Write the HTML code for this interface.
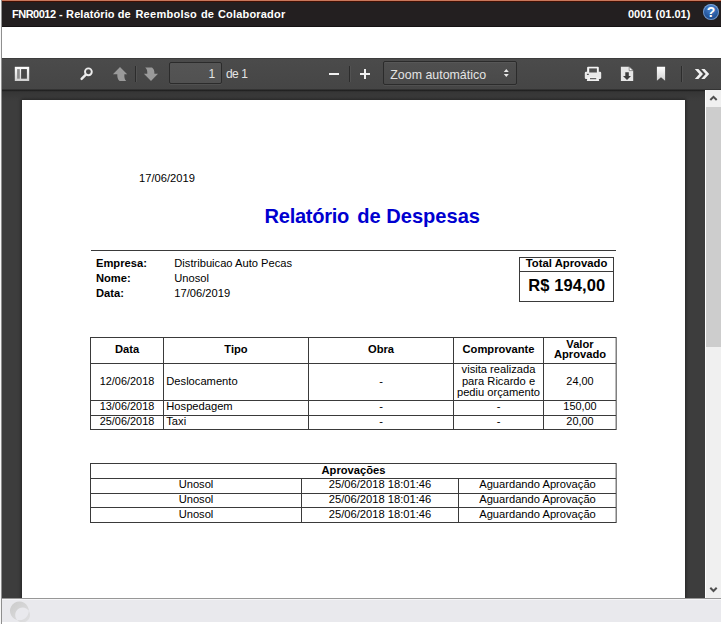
<!DOCTYPE html>
<html lang="pt-BR">
<head>
<meta charset="utf-8">
<title>FNR0012 - Relatório de Reembolso de Colaborador</title>
<style>
html,body{margin:0;padding:0;}
body{width:721px;height:624px;overflow:hidden;background:#fff;position:relative;font-family:"Liberation Sans",Arial,sans-serif;}
.abs{position:absolute;}
#titlebar{left:0;top:0;width:721px;height:27px;background:linear-gradient(#c8775b 0,#c8775b 1px,#430f02 1px,#430f02 2px,#231f20 2px,#231f20 26px,#151213 26px);}
#titlebar .t{position:absolute;color:#fff;font-weight:bold;font-size:11px;line-height:13px;top:8px;white-space:nowrap;}
#help{left:703px;top:4px;width:16px;height:16px;border-radius:50%;background:radial-gradient(circle at 50% 28%,#4f8ad6 0,#27599f 55%,#133b7c 100%);box-shadow:inset 0 0 0 1px rgba(165,195,232,.6);color:#fff;font-weight:bold;font-size:14px;line-height:17px;text-align:center;z-index:8;}
#winl{left:0;top:0;width:2px;height:624px;background:#f8f8f8;z-index:6;}
#winl2{left:1px;top:0;width:1px;height:624px;background:#8f8f8f;z-index:7;}
#toolbar{left:2px;top:58px;width:719px;height:32px;background:linear-gradient(#4b4b4b,#454545);box-shadow:0 1px 1px rgba(0,0,0,.35), inset 0 -1px 0 rgba(0,0,0,.25), inset 0 1px 0 rgba(0,0,0,.18);z-index:3;}
#viewer{left:2px;top:90px;width:703px;height:508px;background:linear-gradient(#343434,#3c3c3c 9px,#3d3d3d 12px);overflow:hidden;}
#sheet{left:22px;top:100px;width:663px;height:498px;background:#fff;box-shadow:0 0 3px 1px rgba(0,0,0,.42);}
#sb{left:705px;top:90px;width:16px;height:508px;background:#f0f0f0;border-left:1px solid #fff;box-sizing:border-box;z-index:4;}
#sbthumb{left:706px;top:107px;width:15px;height:240px;background:#cdcdcd;z-index:4;}
#status{left:2px;top:598px;width:719px;height:24px;background:#e9e9ed;border-top:1px solid #979797;box-sizing:border-box;box-shadow:inset 0 1px 0 #f6f6f8;}
#pgnum{left:169px;top:62px;width:53px;height:22px;box-sizing:border-box;background:linear-gradient(#555,#515151);border:1px solid #2b2b2b;border-radius:2px;box-shadow:0 1px 0 rgba(255,255,255,.06);z-index:3;}
#zoomsel{left:383px;top:61px;width:134px;height:24px;box-sizing:border-box;background:linear-gradient(#4f4f4f,#494949);border:1px solid #2b2b2b;border-radius:2px;box-shadow:0 1px 0 rgba(255,255,255,.06), inset 0 1px 0 rgba(255,255,255,.05);z-index:3;}
#titlebar .w{position:absolute;top:0;}
.doc{color:#000;font-size:11.16px;line-height:13px;white-space:nowrap;}
.b{font-weight:bold;}
.hl{background:#333;height:1px;}
.vl{background:#333;width:1px;}
.c{text-align:center;}
.tbtext{color:#e4e4e4;font-size:12.4px;line-height:14px;white-space:nowrap;}
</style>
</head>
<body>
<div id="titlebar" class="abs">
  <div class="t" style="left:12px;"><span class="w" style="left:0;letter-spacing:-0.5px;">FNR0012</span> <span class="w" style="left:47px;">-</span> <span class="w" style="left:54.1px;letter-spacing:0.1px;">Relatório</span> <span class="w" style="left:105.7px;">de</span> <span class="w" style="left:123.4px;letter-spacing:0.27px;">Reembolso</span> <span class="w" style="left:189px;">de</span> <span class="w" style="left:206px;letter-spacing:0.18px;">Colaborador</span></div>
  <div class="t" style="left:628px;">0001 (01.01)</div>
</div>
<div id="help" class="abs">?</div>
<div id="winl" class="abs"></div>
<div id="winl2" class="abs"></div>

<div id="viewer" class="abs"></div>
<div id="toolbar" class="abs">
</div>
<!-- toolbar items (absolute in body coords) -->
<svg class="abs" style="left:0;top:58px;z-index:4;" width="721" height="32" viewBox="0 58 721 32">
  <defs>
    <linearGradient id="gw" x1="0" y1="0" x2="0" y2="1"><stop offset="0" stop-color="#ffffff"/><stop offset="1" stop-color="#d0d0d0"/></linearGradient>
  </defs>
  <!-- sidebar toggle -->
  <g>
    <rect x="14.8" y="66.8" width="14.4" height="14.2" fill="url(#gw)"/>
    <rect x="17.1" y="69.1" width="2.7" height="9.6" fill="#8c8c8c"/>
    <rect x="21.1" y="69.1" width="5.8" height="9.6" fill="#484848"/>
  </g>
  <!-- search -->
  <g fill="none" stroke="#ececec">
    <circle cx="88.4" cy="71.8" r="3.4" stroke-width="1.9"/>
    <path d="M85.6 74.8 L81.6 78.9" stroke-width="2.4" stroke-linecap="round"/>
  </g>
  <!-- up arrow -->
  <path d="M120 67 L127.2 74.3 L124.4 74.3 C124.2 77.5 124.6 79.6 126.2 81 L119.6 81 C117.6 79.6 117.2 77 117.3 74.3 L112.9 74.3 Z" fill="#9a9a9a"/>
  <!-- sep -->
  <rect x="135" y="66" width="1" height="16" fill="#2c2c2c"/><rect x="136" y="66" width="1" height="16" fill="#525252"/>
  <!-- down arrow -->
  <path d="M151 81 L143.9 73.7 L147.3 73.7 C147.4 71 147 69 145.2 67.6 L152 67.6 C154 69 154.5 71 154.4 73.7 L158 73.7 Z" fill="#9a9a9a"/>
  <!-- minus -->
  <rect x="329" y="73" width="10" height="2" fill="#f0f0f0"/>
  <rect x="349" y="66" width="1" height="16" fill="#2c2c2c"/><rect x="350" y="66" width="1" height="16" fill="#525252"/>
  <!-- plus -->
  <rect x="360" y="73" width="10" height="2" fill="#f0f0f0"/><rect x="364" y="69" width="2" height="10" fill="#f0f0f0"/>
  <!-- select arrows -->
  <path d="M503.8 72 L506.3 69 L508.8 72 Z M503.8 74 L508.8 74 L506.3 77 Z" fill="#e8e8e8"/>
  <!-- print -->
  <g>
    <rect x="587.1" y="66.8" width="11.7" height="7" rx="1" fill="#f4f4f4"/>
    <rect x="584.8" y="71.8" width="16.4" height="7.1" rx="1.2" fill="#e9e9e9"/>
    <rect x="589.2" y="68.4" width="7.7" height="4.1" fill="#505050"/>
    <path d="M587.6 77 L598.4 77 L599.2 81 L586.8 81 Z" fill="#f0f0f0"/>
    <rect x="590" y="78.2" width="6.2" height="1" fill="#444"/>
    <rect x="586.9" y="73.8" width="1.9" height="1.1" fill="#444"/>
  </g>
  <!-- download -->
  <g>
    <path d="M620.9 66.8 L629.2 66.8 L633.2 70.6 L633.2 81 L620.9 81 Z" fill="#e6e6e6"/>
    <path d="M629.2 66.8 L633.2 70.6 L629.2 70.6 Z" fill="#ffffff" stroke="#555" stroke-width="0.6"/>
    <path d="M625.3 72.2 L628.8 72.2 L628.8 76.1 L631 76.1 L627 80 L623 76.1 L625.3 76.1 Z" fill="#3c3c3c"/>
  </g>
  <!-- bookmark -->
  <path d="M656.9 66.8 L665.1 66.8 L665.1 80.8 L661 77.2 L656.9 80.8 Z" fill="url(#gw)"/>
  <rect x="681" y="66" width="1" height="16" fill="#2c2c2c"/><rect x="682" y="66" width="1" height="16" fill="#525252"/>
  <!-- chevrons -->
  <path d="M694.8 69.1 L698.4 69.1 L703 74 L698.4 78.9 L694.8 78.9 L699.3 74 Z M701.2 69.1 L704.6 69.1 L709.2 74 L704.6 78.9 L701.2 78.9 L705.7 74 Z" fill="#f0f0f0"/>
</svg>
<div class="abs" id="pgnum"></div>
<div class="abs tbtext" style="left:205px;top:66.5px;width:10.3px;text-align:right;z-index:5;font-size:12px;">1</div>
<div class="abs tbtext" style="left:226px;top:66.5px;z-index:5;letter-spacing:-0.55px;word-spacing:0.2px;font-size:12px;">de 1</div>
<div class="abs" id="zoomsel"></div>
<div class="abs tbtext" style="left:390.3px;top:67.5px;z-index:5;">Zoom automático</div>
<div id="sheet" class="abs"></div>
<div id="sb" class="abs"></div>
<div id="sbthumb" class="abs"></div>
<div id="status" class="abs"></div>
<svg class="abs" style="left:705px;top:90px;z-index:5;" width="16" height="508" viewBox="705 90 16 508">
  <path d="M710.3 100 L713.5 96.8 L716.7 100" fill="none" stroke="#505050" stroke-width="2"/>
  <path d="M710.3 587.8 L713.5 591 L716.7 587.8" fill="none" stroke="#505050" stroke-width="2"/>
</svg>
<svg class="abs" style="left:2px;top:599px;" width="40" height="23" viewBox="2 599 40 23">
  <defs><linearGradient id="cg" x1="0" y1="0" x2="1" y2="1"><stop offset="0" stop-color="#cbcbcb"/><stop offset="1" stop-color="#e0e0e2"/></linearGradient></defs>
  <path fill-rule="evenodd" fill="url(#cg)" d="M19.4 601.5 a9.4 9.4 0 1 0 0.01 0 Z M22.6 607.6 a7.4 7.4 0 1 0 0.01 0 Z"/>
</svg>
<div class="abs doc" style="top:171.63px;font-size:11.16px;line-height:13px;left:139px;">17/06/2019</div>
<div class="abs doc" style="top:203.84px;font-size:20.1px;line-height:24px;font-weight:bold;color:#0000d0;left:264.6px;"><span style="letter-spacing:-0.3px;margin-right:2.6px;">Relatório</span> de Despesas</div>
<div class="abs" style="left:91px;top:250px;width:525px;height:1px;background:#3a3a3a;"></div>
<div class="abs doc" style="top:256.93px;font-size:11.16px;line-height:13px;font-weight:bold;left:96px;">Empresa:</div>
<div class="abs doc" style="top:256.93px;font-size:11.16px;line-height:13px;left:174.3px;">Distribuicao Auto Pecas</div>
<div class="abs doc" style="top:271.93px;font-size:11.16px;line-height:13px;font-weight:bold;left:96px;">Nome:</div>
<div class="abs doc" style="top:271.93px;font-size:11.16px;line-height:13px;left:174.3px;">Unosol</div>
<div class="abs doc" style="top:286.93px;font-size:11.16px;line-height:13px;font-weight:bold;left:96px;">Data:</div>
<div class="abs doc" style="top:286.93px;font-size:11.16px;line-height:13px;left:174.3px;">17/06/2019</div>
<div class="abs" style="left:519px;top:257px;width:95px;height:1px;background:#3a3a3a;"></div>
<div class="abs" style="left:519px;top:271px;width:95px;height:1px;background:#3a3a3a;"></div>
<div class="abs" style="left:519px;top:301px;width:95px;height:1px;background:#3a3a3a;"></div>
<div class="abs" style="left:519px;top:257px;width:1px;height:45px;background:#3a3a3a;"></div>
<div class="abs" style="left:613px;top:257px;width:1px;height:45px;background:#3a3a3a;"></div>
<div class="abs doc" style="top:257.08px;font-size:11.3px;line-height:13px;font-weight:bold;left:416.6px;width:300px;text-align:center;">Total Aprovado</div>
<div class="abs doc" style="top:274.98px;font-size:16.5px;line-height:20px;font-weight:bold;letter-spacing:0.1px;left:416.70000000000005px;width:300px;text-align:center;">R$ 194,00</div>
<div class="abs" style="left:615px;top:337px;width:1px;height:93px;background:#bcbcbc;"></div>
<div class="abs" style="left:616px;top:337px;width:1px;height:93px;background:#808080;"></div>
<div class="abs" style="left:90px;top:337px;width:526px;height:1px;background:#3a3a3a;"></div>
<div class="abs" style="left:90px;top:363px;width:526px;height:1px;background:#3a3a3a;"></div>
<div class="abs" style="left:90px;top:400px;width:526px;height:1px;background:#3a3a3a;"></div>
<div class="abs" style="left:90px;top:415px;width:526px;height:1px;background:#3a3a3a;"></div>
<div class="abs" style="left:90px;top:429px;width:526px;height:1px;background:#3a3a3a;"></div>
<div class="abs" style="left:90px;top:337px;width:1px;height:93px;background:#3a3a3a;"></div>
<div class="abs" style="left:163px;top:337px;width:1px;height:93px;background:#3a3a3a;"></div>
<div class="abs" style="left:308px;top:337px;width:1px;height:93px;background:#3a3a3a;"></div>
<div class="abs" style="left:453px;top:337px;width:1px;height:93px;background:#3a3a3a;"></div>
<div class="abs" style="left:543px;top:337px;width:1px;height:93px;background:#3a3a3a;"></div>
<div class="abs doc" style="top:342.63px;font-size:11.16px;line-height:13px;font-weight:bold;left:-23.0px;width:300px;text-align:center;">Data</div>
<div class="abs doc" style="top:342.63px;font-size:11.16px;line-height:13px;font-weight:bold;left:86.0px;width:300px;text-align:center;">Tipo</div>
<div class="abs doc" style="top:342.63px;font-size:11.16px;line-height:13px;font-weight:bold;left:231.0px;width:300px;text-align:center;">Obra</div>
<div class="abs doc" style="top:342.63px;font-size:11.16px;line-height:13px;font-weight:bold;left:348.5px;width:300px;text-align:center;">Comprovante</div>
<div class="abs doc" style="top:337.63px;font-size:11.16px;line-height:13px;font-weight:bold;left:430.0px;width:300px;text-align:center;">Valor</div>
<div class="abs doc" style="top:348.43px;font-size:11.16px;line-height:13px;font-weight:bold;left:430.0px;width:300px;text-align:center;">Aprovado</div>
<div class="abs doc" style="top:374.72px;font-size:10.9px;line-height:13px;left:-23.0px;width:300px;text-align:center;">12/06/2018</div>
<div class="abs doc" style="top:374.63px;font-size:11.16px;line-height:13px;left:166.3px;">Deslocamento</div>
<div class="abs doc" style="top:374.63px;font-size:11.16px;line-height:13px;left:231.0px;width:300px;text-align:center;">-</div>
<div class="abs doc" style="top:374.72px;font-size:10.9px;line-height:13px;left:430.0px;width:300px;text-align:center;">24,00</div>
<div class="abs doc" style="top:400.02px;font-size:10.9px;line-height:13px;left:-23.0px;width:300px;text-align:center;">13/06/2018</div>
<div class="abs doc" style="top:399.93px;font-size:11.16px;line-height:13px;left:166.3px;">Hospedagem</div>
<div class="abs doc" style="top:399.93px;font-size:11.16px;line-height:13px;left:231.0px;width:300px;text-align:center;">-</div>
<div class="abs doc" style="top:399.93px;font-size:11.16px;line-height:13px;left:348.5px;width:300px;text-align:center;">-</div>
<div class="abs doc" style="top:400.02px;font-size:10.9px;line-height:13px;left:430.0px;width:300px;text-align:center;">150,00</div>
<div class="abs doc" style="top:415.42px;font-size:10.9px;line-height:13px;left:-23.0px;width:300px;text-align:center;">25/06/2018</div>
<div class="abs doc" style="top:415.33px;font-size:11.16px;line-height:13px;left:166.3px;">Taxi</div>
<div class="abs doc" style="top:415.33px;font-size:11.16px;line-height:13px;left:231.0px;width:300px;text-align:center;">-</div>
<div class="abs doc" style="top:415.33px;font-size:11.16px;line-height:13px;left:348.5px;width:300px;text-align:center;">-</div>
<div class="abs doc" style="top:415.42px;font-size:10.9px;line-height:13px;left:430.0px;width:300px;text-align:center;">20,00</div>
<div class="abs doc" style="top:362.63px;font-size:11.16px;line-height:13px;left:348.5px;width:300px;text-align:center;">visita realizada</div>
<div class="abs doc" style="top:374.83px;font-size:11.16px;line-height:13px;left:348.5px;width:300px;text-align:center;">para Ricardo e</div>
<div class="abs doc" style="top:385.63px;font-size:11.16px;line-height:13px;left:348.5px;width:300px;text-align:center;">pediu orçamento</div>
<div class="abs" style="left:615px;top:463px;width:1px;height:60px;background:#bcbcbc;"></div>
<div class="abs" style="left:616px;top:463px;width:1px;height:60px;background:#808080;"></div>
<div class="abs" style="left:90px;top:463px;width:526px;height:1px;background:#3a3a3a;"></div>
<div class="abs" style="left:90px;top:478px;width:526px;height:1px;background:#3a3a3a;"></div>
<div class="abs" style="left:90px;top:493px;width:526px;height:1px;background:#3a3a3a;"></div>
<div class="abs" style="left:90px;top:507px;width:526px;height:1px;background:#3a3a3a;"></div>
<div class="abs" style="left:90px;top:522px;width:526px;height:1px;background:#3a3a3a;"></div>
<div class="abs" style="left:90px;top:463px;width:1px;height:60px;background:#3a3a3a;"></div>
<div class="abs" style="left:301px;top:478px;width:1px;height:45px;background:#3a3a3a;"></div>
<div class="abs" style="left:458px;top:478px;width:1px;height:45px;background:#3a3a3a;"></div>
<div class="abs doc" style="top:464.03px;font-size:11.16px;line-height:13px;font-weight:bold;left:203.5px;width:300px;text-align:center;">Aprovações</div>
<div class="abs doc" style="top:478.23px;font-size:11.16px;line-height:13px;left:46px;width:300px;text-align:center;">Unosol</div>
<div class="abs doc" style="top:478.23px;font-size:11.16px;line-height:13px;left:230px;width:300px;text-align:center;">25/06/2018 18:01:46</div>
<div class="abs doc" style="top:478.23px;font-size:11.16px;line-height:13px;left:387.5px;width:300px;text-align:center;">Aguardando Aprovação</div>
<div class="abs doc" style="top:493.23px;font-size:11.16px;line-height:13px;left:46px;width:300px;text-align:center;">Unosol</div>
<div class="abs doc" style="top:493.23px;font-size:11.16px;line-height:13px;left:230px;width:300px;text-align:center;">25/06/2018 18:01:46</div>
<div class="abs doc" style="top:493.23px;font-size:11.16px;line-height:13px;left:387.5px;width:300px;text-align:center;">Aguardando Aprovação</div>
<div class="abs doc" style="top:507.93px;font-size:11.16px;line-height:13px;left:46px;width:300px;text-align:center;">Unosol</div>
<div class="abs doc" style="top:507.93px;font-size:11.16px;line-height:13px;left:230px;width:300px;text-align:center;">25/06/2018 18:01:46</div>
<div class="abs doc" style="top:507.93px;font-size:11.16px;line-height:13px;left:387.5px;width:300px;text-align:center;">Aguardando Aprovação</div>


</body>
</html>
